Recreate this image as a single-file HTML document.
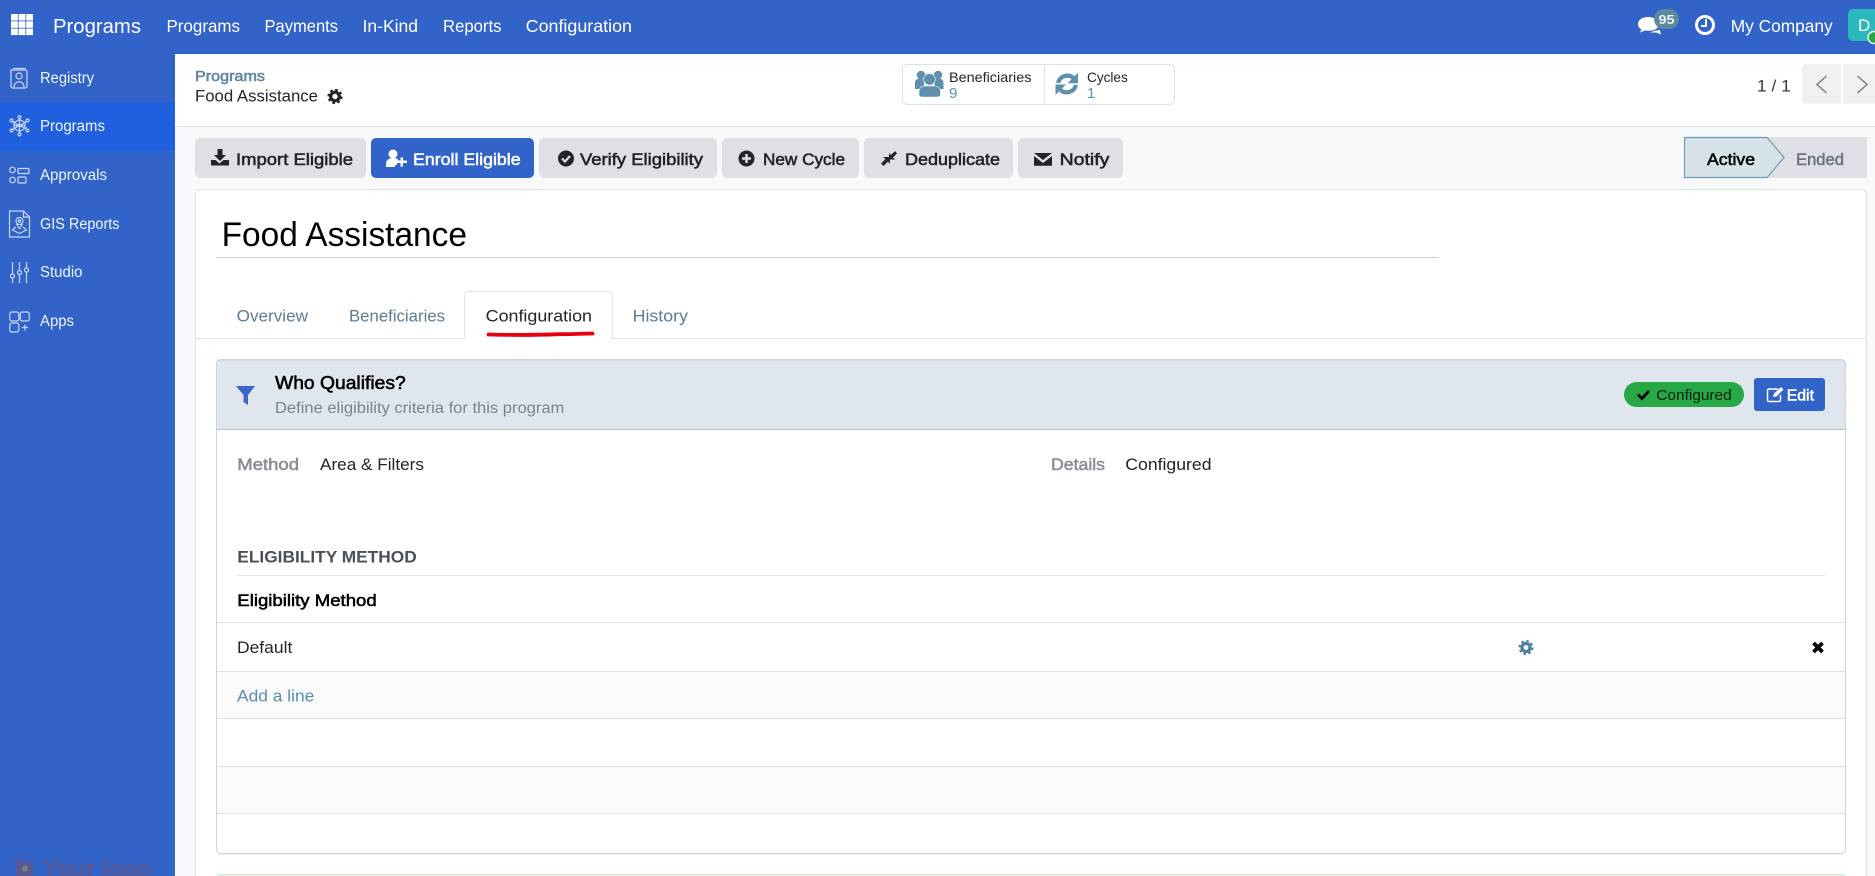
<!DOCTYPE html>
<html><head><meta charset="utf-8"><title>Programs</title>
<style>
html,body{margin:0;padding:0;width:1875px;height:876px;overflow:hidden;background:#f8f9fb}
svg{display:block}
text{font-family:"Liberation Sans",Arial,sans-serif;white-space:pre}
.semi{stroke:currentColor;stroke-width:.55px}
.side{fill:none;stroke:#c9d8f2;stroke-width:1.2}
</style></head><body>
<svg xmlns="http://www.w3.org/2000/svg" width="1875" height="876" viewBox="0 0 1875 876">
<rect width="1875" height="876" fill="#f8f9fb"/>
<!-- top bar and sidebar -->
<rect width="1875" height="54" fill="#3163c8"/>
<rect y="54" width="175" height="822" fill="#3163c8"/>
<rect y="102" width="175" height="49" fill="#2060df"/>
<!-- grid icon -->
<g fill="#fff">
<rect x="11" y="14" width="6.800" height="6.500"/><rect x="18.600" y="14" width="6.800" height="6.500"/><rect x="26.200" y="14" width="6.800" height="6.500"/>
<rect x="11" y="21.300" width="6.800" height="6.500"/><rect x="18.600" y="21.300" width="6.800" height="6.500"/><rect x="26.200" y="21.300" width="6.800" height="6.500"/>
<rect x="11" y="28.600" width="6.800" height="6.500"/><rect x="18.600" y="28.600" width="6.800" height="6.500"/><rect x="26.200" y="28.600" width="6.800" height="6.500"/>
</g>
<g fill="#fff" font-size="17.5">
<text x="53" y="33" font-size="20" textLength="88" lengthAdjust="spacingAndGlyphs">Programs</text>
<text x="166.5" y="32" textLength="73.5" lengthAdjust="spacingAndGlyphs">Programs</text>
<text x="264.5" y="32" textLength="73.5" lengthAdjust="spacingAndGlyphs">Payments</text>
<text x="362.5" y="32" textLength="55.5" lengthAdjust="spacingAndGlyphs">In-Kind</text>
<text x="443" y="32" textLength="58.5" lengthAdjust="spacingAndGlyphs">Reports</text>
<text x="525.7" y="32" textLength="106.3" lengthAdjust="spacingAndGlyphs">Configuration</text>
<text x="1730.7" y="32" textLength="102" lengthAdjust="spacingAndGlyphs">My Company</text>
</g>
<!-- sidebar text -->
<g fill="#eef3fc" font-size="15.5">
<text x="40" y="83" textLength="54" lengthAdjust="spacingAndGlyphs">Registry</text>
<text x="40" y="131" textLength="65" lengthAdjust="spacingAndGlyphs">Programs</text>
<text x="40" y="180" textLength="67" lengthAdjust="spacingAndGlyphs">Approvals</text>
<text x="40" y="229" textLength="79.5" lengthAdjust="spacingAndGlyphs">GIS Reports</text>
<text x="40" y="277" textLength="42.5" lengthAdjust="spacingAndGlyphs">Studio</text>
<text x="40" y="326" textLength="34" lengthAdjust="spacingAndGlyphs">Apps</text>
</g>
<!-- sidebar icons -->
<g class="side">
<path d="M13 70h12a2 2 0 0 1 2 2v14a2 2 0 0 1-2 2H13a2 2 0 0 1-2-2V70z"/><path d="M13 68.500h12v1.500"/><circle cx="19" cy="76" r="3"/><path d="M14 87c0-7 10-7 10 0"/>
<path d="M19.500 119.500l5.500 3v6l-5.500 3-5.500-3v-6zM14 122.500l11 6M25 122.500l-11 6M19.500 119.500v12M14 125.500h11"/>
<path d="M19.500 119.500v-1.500M19.500 131.500v1.500M14 122.500l-1.500-1M25 122.500l1.500-1M14 128.500l-1.500 1M25 128.500l1.500-1"/>
<circle cx="19.500" cy="117" r="1.400"/><circle cx="19.500" cy="134.500" r="1.400"/><circle cx="11.500" cy="120.500" r="1.400"/><circle cx="27.500" cy="120.500" r="1.400"/><circle cx="11.500" cy="130.500" r="1.400"/><circle cx="27.500" cy="130.500" r="1.400"/>
<circle cx="12.500" cy="170" r="2.800"/><circle cx="12.500" cy="180" r="2.800"/><rect x="18" y="168.500" width="11" height="5" rx="1"/><rect x="18" y="177" width="8" height="6" rx="1"/>
<path d="M9.500 211h14l6 6v20h-20z"/><path d="M23.500 211v6h6"/><circle cx="19.500" cy="221" r="3.500"/><circle cx="19.500" cy="221" r="1"/><path d="M19.500 229l-3-5M19.500 229l3-5M16 227l-3.500 3 7 3.500 7-3.500-3.500-3"/>
<path d="M12.500 262v21M19.500 262v21M26.500 262v21"/><circle cx="12.500" cy="276" r="2" fill="#3163c8"/><circle cx="19.500" cy="272.500" r="2" fill="#3163c8"/><circle cx="26.500" cy="270" r="2" fill="#3163c8"/>
<rect x="9.800" y="312" width="9" height="9" rx="2"/><rect x="20.300" y="312" width="9" height="9" rx="2"/><rect x="9.800" y="323" width="9" height="9" rx="2"/><path d="M25 324.500v6M22 327.500h6"/>
</g>
<!-- logo -->
<g fill="#5a5894">
<path d="M16 863h4l2-2h6l2 2h3v13H16z"/><path d="M13 860h7M16.500 856.500v7" stroke="#5a5894" stroke-width="1.800"/>
<circle cx="25" cy="868.500" r="3" fill="#7d7f80"/>
<text x="43" y="877" font-size="26" font-weight="bold" textLength="109" lengthAdjust="spacingAndGlyphs">Your logo</text>
</g>
<!-- control panel -->
<rect x="175" y="54" width="1700" height="72" fill="#fff"/>
<rect x="175" y="126" width="1700" height="1" fill="#dee2e6"/>
<text x="195" y="81" font-size="14.500" fill="#5f86a2" color="#5f86a2" class="semi" textLength="70" lengthAdjust="spacingAndGlyphs">Programs</text>
<text x="195" y="101.700" font-size="17" fill="#212529" textLength="123" lengthAdjust="spacingAndGlyphs">Food Assistance</text>
<g fill="none" stroke="#212529"><circle cx="335" cy="96.500" r="4.300" stroke-width="3.200"/><circle cx="335" cy="96.500" r="6.600" stroke-width="2" stroke-dasharray="2.600 2.580"/></g>
<!-- stat box -->
<rect x="902.500" y="64.500" width="272" height="40" rx="5" fill="#fff" stroke="#dee2e6"/>
<rect x="1044" y="65" width="1" height="39" fill="#dee2e6"/>
<g fill="#5f8fae">
<circle cx="921" cy="75" r="4.200"/><circle cx="938" cy="75" r="4.200"/>
<path d="M915 89v-6c0-3 2-4.500 5-4.500h4v10.500zM943.500 89v-6c0-3-2-4.500-5-4.500h-4v10.500z"/>
<circle cx="929.500" cy="79.300" r="5.800" stroke="#fff" stroke-width=".6"/>
<path d="M922 97c-2 0-3-1-3-2.500v-3c0-3.500 2.500-5.500 5.500-5.500h10c3 0 6 2 6 5.500v3c0 1.500-1 2.500-3 2.500z" stroke="#fff" stroke-width=".6"/>
</g>
<text x="949" y="82" font-size="14" fill="#212529" textLength="82.400" lengthAdjust="spacingAndGlyphs">Beneficiaries</text>
<text x="949" y="98" font-size="15" fill="#5f8fae">9</text>
<g fill="none" stroke="#5f8fae" stroke-width="4.200">
<path d="M1058 83a9.500 9.500 0 0 1 15.500-5"/><path d="M1076 85a9.500 9.500 0 0 1-15.500 5"/>
</g>
<g fill="#5f8fae"><path d="M1078 72.700v10.500h-10.500z"/><path d="M1055.500 95v-10.500h10.500z"/></g>
<text x="1087" y="82" font-size="14" fill="#212529" textLength="40.800" lengthAdjust="spacingAndGlyphs">Cycles</text>
<text x="1087" y="98" font-size="15" fill="#5f8fae">1</text>
<!-- pager -->
<text x="1757" y="91.500" font-size="16.500" fill="#343a40" textLength="33.700" lengthAdjust="spacingAndGlyphs">1 / 1</text>
<path d="M1802 68a4 4 0 0 1 4-4h34.700v39.700H1806a4 4 0 0 1-4-4z" fill="#eff0f1"/>
<rect x="1843" y="64" width="32" height="39.700" fill="#eff0f1"/>
<path d="M1826.500 76l-9.500 8.500 9.500 8.500M1857.500 76l9.500 8.500-9.500 8.500" fill="none" stroke="#7b8085" stroke-width="1.500"/>
<!-- top right -->
<path d="M1648 17c-6 0-10 3-10 7 0 2.400 1.400 4.300 3.500 5.500l-1.500 3 5-2 4 .3c6 0 10-3 10-6.800S1654 17 1648 17z" fill="#fff"/>
<path d="M1654 31l6-1 1 4.500-5-2-6 0z" fill="#fff"/>
<rect x="1654" y="9" width="25" height="20" rx="10" fill="#5b8aa0"/>
<text x="1658.500" y="24" font-size="13" font-weight="bold" fill="#eef3f6" textLength="16" lengthAdjust="spacingAndGlyphs">95</text>
<circle cx="1705" cy="25" r="8.500" fill="none" stroke="#fff" stroke-width="3"/>
<path d="M1706 19v7h-5" fill="none" stroke="#fff" stroke-width="2"/>
<path d="M1875 9h-22a5 5 0 0 0-5 5v22a5 5 0 0 0 5 5h22z" fill="#2ab8bc"/>
<text x="1858" y="31" font-size="17" fill="#fff">D</text>
<circle cx="1874" cy="37.500" r="6" fill="#28a745" stroke="#e8f4f0" stroke-width="1.500"/>
<!-- action buttons -->
<g fill="#dee0e5">
<rect x="195" y="138" width="171" height="40" rx="5"/>
<rect x="539" y="138" width="178" height="40" rx="5"/>
<rect x="722" y="138" width="137" height="40" rx="5"/>
<rect x="864" y="138" width="149" height="40" rx="5"/>
<rect x="1018" y="138" width="105" height="40" rx="5"/>
</g>
<rect x="371" y="138" width="163" height="40" rx="5" fill="#3163c8"/>
<g font-size="17" fill="#212529" color="#212529" class="semi">
<text x="236" y="165" textLength="117" lengthAdjust="spacingAndGlyphs">Import Eligible</text>
<text x="413" y="165" fill="#fff" color="#fff" textLength="107.600" lengthAdjust="spacingAndGlyphs" style="stroke:#fff">Enroll Eligible</text>
<text x="580" y="165" textLength="123" lengthAdjust="spacingAndGlyphs">Verify Eligibility</text>
<text x="763" y="165" textLength="82" lengthAdjust="spacingAndGlyphs">New Cycle</text>
<text x="905" y="165" textLength="95" lengthAdjust="spacingAndGlyphs">Deduplicate</text>
<text x="1059.600" y="165" textLength="49.800" lengthAdjust="spacingAndGlyphs">Notify</text>
</g>
<!-- button icons -->
<g fill="#212529">
<path d="M217.500 149h5v6h3.500l-6 6-6-6h3.500z"/>
<path d="M211 160h4.500l4 3.500 4-3.500h5.500v5.500h-18z"/>
<circle cx="566" cy="158.500" r="8"/>
<circle cx="746.500" cy="158.500" r="8"/>
<path d="M1034 153h18l-9 7zM1034 156l9 7 9-7v9.700h-18z"/>
<path d="M881 163.500l4.500-4.500-2.500-2h7v7l-2-2.500-4.500 4.500zM897 153.500l-4 4 2 2h-6v-6.500l2 2 4-4z"/>
</g>
<path d="M562 158.500l3 3 5-5.500" fill="none" stroke="#dee0e5" stroke-width="2.200"/>
<path d="M742 158.500h9M746.500 154v9" fill="none" stroke="#dee0e5" stroke-width="2.400"/>
<g fill="#fff">
<circle cx="393" cy="154" r="4.500"/><path d="M386 167v-3c0-4 3-6 7-6s5 1 6 3v1h-2v3h-2v2z"/>
<path d="M400.500 157.500h2.500v3h4v2.500h-4v3.500h-2.500v-3.500h-4v-2.500h4z"/>
</g>
<!-- statusbar -->
<path d="M1768 137h99v41h-99z" fill="#dee0e5"/>
<path d="M1684.500 137.500h82.500l17 20-17 20h-82.500z" fill="#d6e2ea" stroke="#6f9ab5" stroke-width="1.200"/>
<text x="1707" y="165" font-size="17" fill="#000" color="#000" class="semi" textLength="48" lengthAdjust="spacingAndGlyphs">Active</text>
<text x="1796" y="165" font-size="17" fill="#6c757d" color="#6c757d" class="semi" textLength="48" lengthAdjust="spacingAndGlyphs">Ended</text>
<!-- sheet card -->
<rect x="195.500" y="189.500" width="1671" height="700" rx="4" fill="#fff" stroke="#dee2e6"/>
<text x="221.600" y="246" font-size="34" fill="#000" textLength="245.400" lengthAdjust="spacingAndGlyphs">Food Assistance</text>
<rect x="216" y="257" width="1222.600" height="1" fill="#ccc"/>
<!-- tabs -->
<rect x="196" y="338" width="1670" height="1" fill="#dee2e6"/>
<path d="M464.500 338.500V295.500a4 4 0 0 1 4-4h140a4 4 0 0 1 4 4v43" fill="#fff" stroke="#dee2e6"/>
<rect x="465" y="337" width="147" height="3" fill="#fff"/>
<g font-size="17" fill="#5f7a92">
<text x="236.700" y="321.700" textLength="71.300" lengthAdjust="spacingAndGlyphs">Overview</text>
<text x="349" y="321.700" textLength="96" lengthAdjust="spacingAndGlyphs">Beneficiaries</text>
<text x="485.700" y="321.700" fill="#212529" textLength="106.300" lengthAdjust="spacingAndGlyphs">Configuration</text>
<text x="632.600" y="321.700" textLength="55.400" lengthAdjust="spacingAndGlyphs">History</text>
</g>
<path d="M488.500 334.500c30 .8 50 .5 70-.3 12 0 24-.5 34-.7" fill="none" stroke="#e8000e" stroke-width="3.800" stroke-linecap="round"/>
<!-- inner panel -->
<rect x="216.500" y="359.500" width="1629" height="494" rx="4" fill="#fff" stroke="#cfd2d6"/>
<rect x="218" y="854" width="1626" height="1" fill="#eff0f2"/>
<path d="M217 429V363.500a4 4 0 0 1 4-4h1620.500a4 4 0 0 1 4 4V429z" fill="#dfe6ed"/>
<path d="M216.500 429.500h1629" stroke="#babfc5"/>
<path d="M216.500 429V364a4 4 0 0 1 4-4h1621a4 4 0 0 1 4 4v65" fill="none" stroke="#cfd2d6"/>
<path d="M236 386h19l-7 9v10l-4.500-3v-7z" fill="#3d64c8"/>
<text x="275" y="389" font-size="18" fill="#000" color="#000" class="semi" textLength="130.700" lengthAdjust="spacingAndGlyphs">Who Qualifies?</text>
<text x="275" y="413" font-size="15.500" fill="#7d8288" textLength="289.300" lengthAdjust="spacingAndGlyphs">Define eligibility criteria for this program</text>
<rect x="1624" y="382" width="120" height="25" rx="12.500" fill="#28a745"/>
<path d="M1638 394.500l4 4 7-7.500" fill="none" stroke="#000" stroke-width="2.800"/>
<text x="1656.300" y="400" font-size="15" fill="#06200c" textLength="75.400" lengthAdjust="spacingAndGlyphs">Configured</text>
<rect x="1754" y="378" width="71" height="33" rx="3" fill="#3163c8"/>
<path d="M1778 389h-9a1.500 1.500 0 0 0-1.500 1.500v9.500a1.500 1.500 0 0 0 1.500 1.500h10a1.500 1.500 0 0 0 1.500-1.500v-5" fill="none" stroke="#fff" stroke-width="1.500"/>
<path d="M1773 397l1-3.500 7-6.500 2.500 2.500-7 7z" fill="#fff"/>
<text x="1786.700" y="400.700" font-size="16" fill="#fff" color="#fff" class="semi" style="stroke:#fff" textLength="27.300" lengthAdjust="spacingAndGlyphs">Edit</text>
<text x="237.300" y="470" font-size="17" fill="#8a8f94" color="#8a8f94" class="semi" textLength="61.700" lengthAdjust="spacingAndGlyphs">Method</text>
<text x="320" y="470" font-size="17" fill="#212529" textLength="104" lengthAdjust="spacingAndGlyphs">Area &amp; Filters</text>
<text x="1051" y="470" font-size="17" fill="#8a8f94" color="#8a8f94" class="semi" textLength="54" lengthAdjust="spacingAndGlyphs">Details</text>
<text x="1125.300" y="470" font-size="17" fill="#212529" textLength="86.200" lengthAdjust="spacingAndGlyphs">Configured</text>
<text x="237.300" y="562.700" font-size="17" font-weight="bold" fill="#495057" textLength="179.400" lengthAdjust="spacingAndGlyphs">ELIGIBILITY METHOD</text>
<rect x="237" y="575" width="1588" height="1" fill="#e2e4e6"/>
<text x="237.300" y="606" font-size="17" fill="#000" color="#000" class="semi" textLength="139.400" lengthAdjust="spacingAndGlyphs">Eligibility Method</text>
<!-- list -->
<rect x="217" y="671" width="1628" height="47" fill="#fafafb"/>
<rect x="217" y="766" width="1628" height="47" fill="#fafafb"/>
<g fill="#e0dfe6">
<rect x="217" y="622" width="1628" height="1"/>
<rect x="217" y="671" width="1628" height="1"/>
<rect x="217" y="718" width="1628" height="1"/>
<rect x="217" y="766" width="1628" height="1"/>
<rect x="217" y="813" width="1628" height="1"/>
</g>
<text x="237" y="653" font-size="17" fill="#212529" textLength="55.300" lengthAdjust="spacingAndGlyphs">Default</text>
<g fill="none" stroke="#4d7fa0"><circle cx="1526" cy="647.500" r="4" stroke-width="3.200"/><circle cx="1526" cy="647.500" r="6.500" stroke-width="2" stroke-dasharray="2.550 2.560"/></g>
<path d="M1813.500 643l9 9M1822.500 643l-9 9" fill="none" stroke="#000" stroke-width="3.800"/>
<text x="237" y="701.500" font-size="17" fill="#5a8db0" textLength="77.300" lengthAdjust="spacingAndGlyphs">Add a line</text>
<!-- next panel -->
<rect x="217" y="874.500" width="1628" height="8" rx="3" fill="#eaf4ec" stroke="#d0e4d4"/>
</svg>
</body></html>
